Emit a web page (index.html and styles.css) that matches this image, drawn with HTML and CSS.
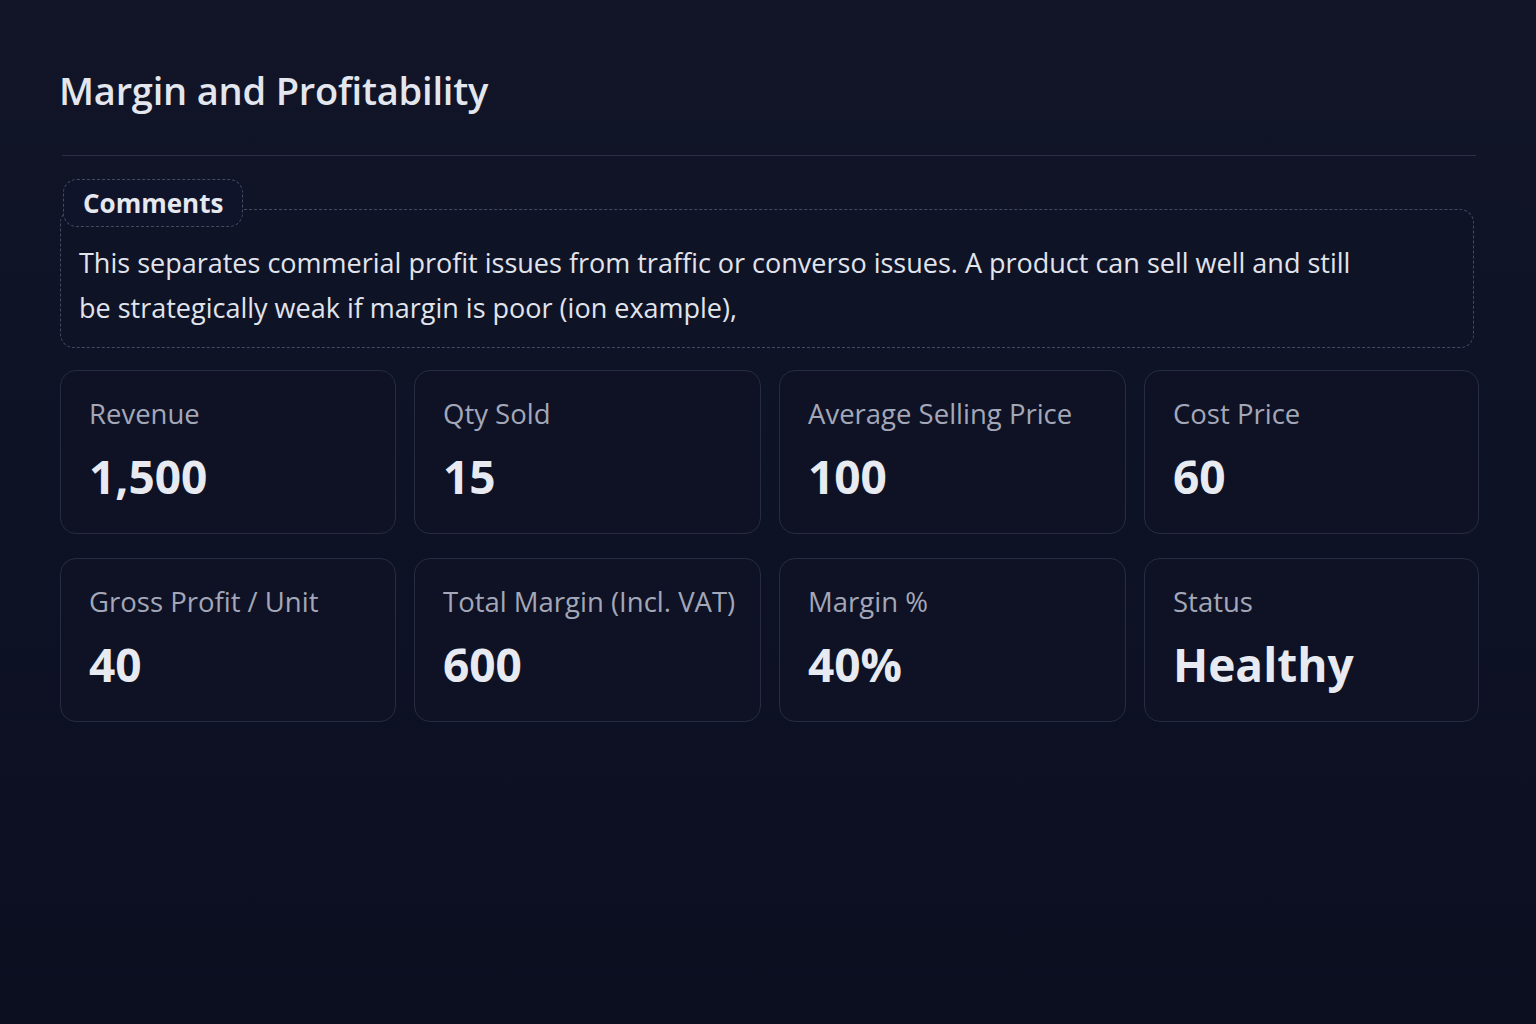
FILE: index.html
```html
<!DOCTYPE html>
<html lang="en">
<head>
  <meta charset="UTF-8">
  <title>Margin and Profitability</title>
  <meta name="viewport" content="width=device-width, initial-scale=1.0">
  <link rel="stylesheet" href="styles.css">
</head>
<body>
  <main class="panel">
    <h1 class="panel-title">Margin and Profitability</h1>
    <hr class="panel-rule">

    <!-- Analyst note -->
    <section class="comments">
      <div class="comments-tag">Comments</div>
      <div class="comments-box">
        <p>This separates commerial profit issues from traffic or converso issues. A product can sell well and still be strategically weak if margin is poor (ion example),</p>
      </div>
    </section>

    <!-- KPI tiles -->
    <div class="kpi-grid">
      <div class="kpi"><div class="kpi-label">Revenue</div><div class="kpi-value">1,500</div></div>
      <div class="kpi"><div class="kpi-label">Qty Sold</div><div class="kpi-value">15</div></div>
      <div class="kpi"><div class="kpi-label">Average Selling Price</div><div class="kpi-value">100</div></div>
      <div class="kpi"><div class="kpi-label">Cost Price</div><div class="kpi-value">60</div></div>
      <div class="kpi"><div class="kpi-label">Gross Profit / Unit</div><div class="kpi-value">40</div></div>
      <div class="kpi"><div class="kpi-label">Total Margin (Incl. VAT)</div><div class="kpi-value">600</div></div>
      <div class="kpi"><div class="kpi-label">Margin %</div><div class="kpi-value">40%</div></div>
      <div class="kpi"><div class="kpi-label">Status</div><div class="kpi-value">Healthy</div></div>
    </div>
  </main>
</body>
</html>
```

FILE: styles.css
```css
html, body { margin:0; padding:0; min-height:100vh; }
body {
  background: linear-gradient(180deg, #111527 0%, #0e1225 50%, #0b0f20 100%);
  color: #e6e8ef;
  font-family: 'Open Sans', 'Noto Sans', Arial, sans-serif;
}
.panel { padding: 66px 58px 0 60px; }
.panel-title {
  margin: 0 0 0 -1px;
  font-size: 38px; font-weight: 600; line-height: 48px;
  color: #e4e6ee; letter-spacing: -0.2px;
}
.panel-rule {
  border: 0; border-top: 1px solid #2b2f43;
  margin: 41px 0 0 2px;
  width: 1414px;
}
/* Comments block with tab label sitting on the top edge */
.comments { margin-top: 23px; position: relative; }
.comments-tag {
  display: inline-block;
  margin-left: 3px;
  padding: 0 19px;
  height: 46px; line-height: 46px;
  border: 1px dashed #454a62; border-radius: 14px;
  background: #10142a;
  font-size: 26px; font-weight: 700; color: #e6e8f0;
  position: relative; z-index: 2;
}
.comments-box {
  box-sizing: border-box;
  margin-top: -18px;
  width: 1414px;
  border: 1px dashed #454a62; border-radius: 14px;
  background: #0f1326;
  padding: 30px 18px 17px 18px;
}
.comments-box p {
  margin: 0;
  max-width: 1300px;
  font-size: 27px; line-height: 45px; color: #e2e4ec;
}
/* KPI tiles */
.kpi-grid {
  margin-top: 22px;
  display: grid;
  grid-template-columns: 336fr 347fr 347fr 335fr;
  column-gap: 18px; row-gap: 24px;
  width: 1419px;
}
.kpi {
  height: 164px; box-sizing: border-box;
  border: 1px solid #282c40; border-radius: 16px;
  background: #0e1224;
  padding: 26px 16px 0 28px;
}
.kpi-label {
  font-size: 27.5px; line-height: 34px; color: #a3a7b8;
  white-space: nowrap;
}
.kpi-value {
  margin-top: 17px;
  font-size: 46px; font-weight: 700; line-height: 56px; color: #e8eaf1;
}
```
